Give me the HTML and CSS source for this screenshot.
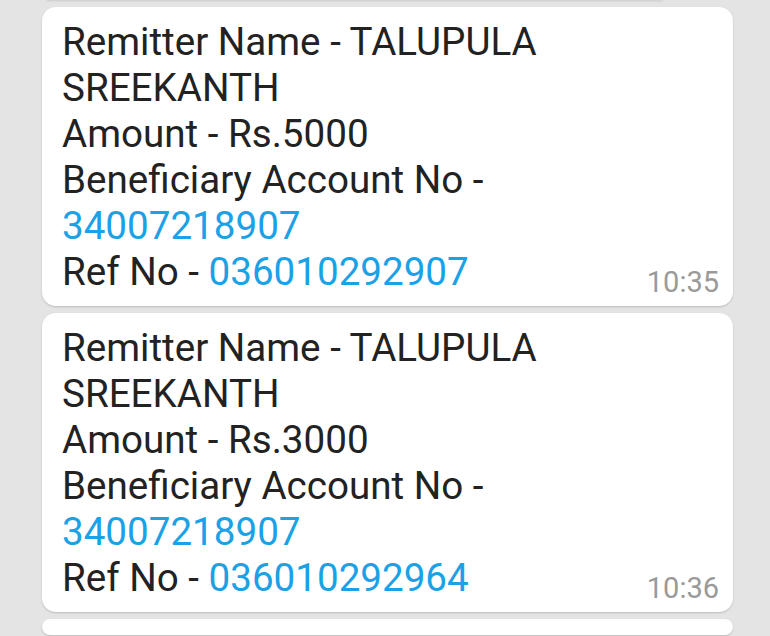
FILE: index.html
```html
<!DOCTYPE html>
<html>
<head>
<meta charset="utf-8">
<link rel="stylesheet" href="styles.css">
</head>
<body>
<div class="chat">
  <div class="stub"></div>
  <div class="card">
    <div class="msg">
      <div>Remitter Name - TALUPULA SREEKANTH</div>
      <div>Amount - Rs.5000</div>
      <div>Beneficiary Account No - <span class="link">34007218907</span></div>
      <div>Ref No - <span class="link">036010292907</span></div>
    </div>
    <div class="time">10:35</div>
  </div>
  <div class="card">
    <div class="msg">
      <div>Remitter Name - TALUPULA SREEKANTH</div>
      <div>Amount - Rs.3000</div>
      <div>Beneficiary Account No - <span class="link">34007218907</span></div>
      <div>Ref No - <span class="link">036010292964</span></div>
    </div>
    <div class="time">10:36</div>
  </div>
  <div class="card tail"></div>
</div>
</body>
</html>
```
FILE: styles.css
```css
html, body {
  margin: 0;
  padding: 0;
  background: #e4e4e4;
  height: 636px;
  overflow: hidden;
}
.chat {
  display: flex;
  flex-direction: column;
  gap: 7px;
  padding-left: 42px;
  width: 691px;
}
.stub {
  height: 1px;
  width: 617px;
  margin-left: 4px;
  margin-top: -1px;
  border-radius: 0 0 12px 12px;
  background: #dcdcdc;
  box-shadow: 0 1px 2px rgba(0,0,0,0.15);
}
.card {
  background: #fff;
  border-radius: 14px;
  box-shadow: 0 1px 2px rgba(0,0,0,0.18);
  display: flex;
  align-items: flex-end;
  justify-content: space-between;
  padding: 12px 14px 11px 20px;
  font-family: Roboto, "Noto Sans", sans-serif;
}
.msg {
  font-size: 38.6px;
  line-height: 46px;
  color: #222;
  width: 500px;
}
.link {
  color: #1ba1e6;
}
.time {
  font-size: 29px;
  color: #9a9a9a;
  line-height: 26px;
}
.tail {
  height: 16px;
  padding: 0;
}
```
